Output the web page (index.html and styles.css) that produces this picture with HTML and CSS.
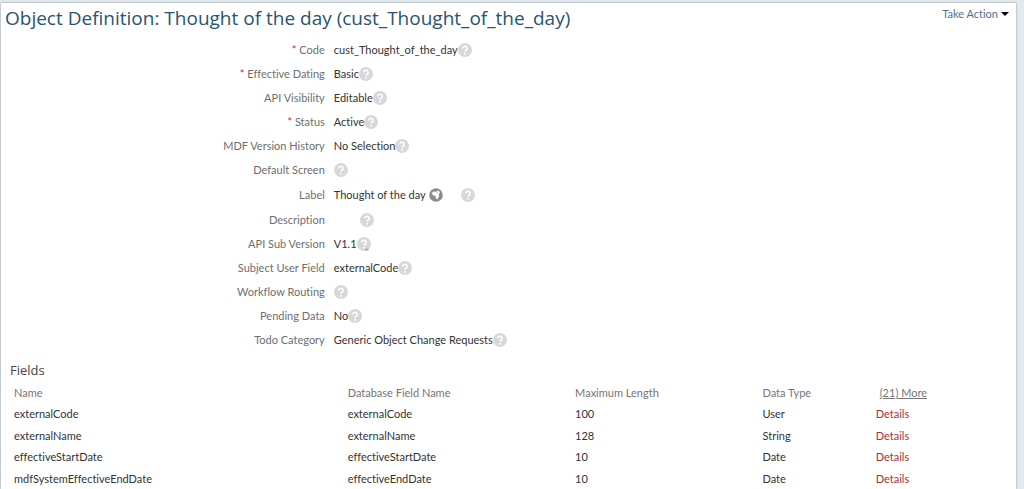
FILE: index.html
```html
<!DOCTYPE html>
<html lang="en">
<head>
<meta charset="utf-8">
<meta name="viewport" content="width=device-width, initial-scale=1">
<title>Object Definition</title>
<link rel="stylesheet" href="styles.css">
</head>
<body>
<svg class="sprite" aria-hidden="true">
  <symbol id="help" viewBox="0 0 14 14">
    <circle cx="7" cy="7" r="7" fill="#d8d8d8"/>
    <path d="M4.8 5.5a2.2 2.1 0 1 1 3.5 1.6C7.500 7.700 7 7.900 7 8.700" fill="none" stroke="#fff" stroke-width="1.500"/>
    <circle cx="7" cy="10.700" r="1" fill="#fff"/>
  </symbol>
  <symbol id="globe" viewBox="0 0 14 14">
    <circle cx="7" cy="7" r="6.800" fill="#8c8c8c"/>
    <path d="M2.500 5.500 4.500 3.500l2.500.3L9.500 2.500l1.500 2-1.200 1.600.2 2.400L8.200 11.500 6.800 10 6.600 7.800 4.600 7.500z" fill="#fff"/>
    <path d="M8.500 3.500l-1 1.500 1 .8z" fill="#8c8c8c"/>
  </symbol>
</svg>
<main class="panel">
  <header class="panel-header">
    <h1 class="title">Object Definition: Thought of the day (cust_Thought_of_the_day)</h1>
    <button class="action" type="button">Take Action <span class="caret"></span></button>
  </header>

  <dl class="form">
    <div class="row"><dt class="label required">Code</dt><dd class="value">cust_Thought_of_the_day<svg class="icon"><use href="#help"/></svg></dd></div>
    <div class="row"><dt class="label required">Effective Dating</dt><dd class="value">Basic<svg class="icon"><use href="#help"/></svg></dd></div>
    <div class="row"><dt class="label">API Visibility</dt><dd class="value">Editable<svg class="icon"><use href="#help"/></svg></dd></div>
    <div class="row"><dt class="label required">Status</dt><dd class="value">Active<svg class="icon"><use href="#help"/></svg></dd></div>
    <div class="row"><dt class="label">MDF Version History</dt><dd class="value">No Selection<svg class="icon"><use href="#help"/></svg></dd></div>
    <div class="row"><dt class="label">Default Screen</dt><dd class="value"><svg class="icon"><use href="#help"/></svg></dd></div>
    <div class="row row-translated"><dt class="label">Label</dt><dd class="value">Thought of the day<svg class="icon globe"><use href="#globe"/></svg><svg class="icon"><use href="#help"/></svg></dd></div>
    <div class="row"><dt class="label">Description</dt><dd class="value value-empty"><svg class="icon"><use href="#help"/></svg></dd></div>
    <div class="row"><dt class="label">API Sub Version</dt><dd class="value">V1.1<svg class="icon" viewBox="0 0 14 14"><use href="#help"/><path d="M8 12.500h3.500" stroke="#e08a8a" stroke-width="1.500"/></svg></dd></div>
    <div class="row"><dt class="label">Subject User Field</dt><dd class="value">externalCode<svg class="icon"><use href="#help"/></svg></dd></div>
    <div class="row"><dt class="label">Workflow Routing</dt><dd class="value"><svg class="icon"><use href="#help"/></svg></dd></div>
    <div class="row"><dt class="label">Pending Data</dt><dd class="value">No<svg class="icon"><use href="#help"/></svg></dd></div>
    <div class="row"><dt class="label">Todo Category</dt><dd class="value">Generic Object Change Requests<svg class="icon"><use href="#help"/></svg></dd></div>
  </dl>

  <section class="fields">
    <h2 class="subtitle">Fields</h2>
    <table class="table">
      <thead>
        <tr><th class="col-name">Name</th><th class="col-db">Database Field Name</th><th class="col-length">Maximum Length</th><th class="col-type">Data Type</th><th><a class="more" href="#more">(21) More</a></th></tr>
      </thead>
      <tbody>
        <tr><td>externalCode</td><td>externalCode</td><td>100</td><td>User</td><td><a class="details" href="#details">Details</a></td></tr>
        <tr><td>externalName</td><td>externalName</td><td>128</td><td>String</td><td><a class="details" href="#details">Details</a></td></tr>
        <tr><td>effectiveStartDate</td><td>effectiveStartDate</td><td>10</td><td>Date</td><td><a class="details" href="#details">Details</a></td></tr>
        <tr><td>mdfSystemEffectiveEndDate</td><td>effectiveEndDate</td><td>10</td><td>Date</td><td><a class="details" href="#details">Details</a></td></tr>
      </tbody>
    </table>
  </section>
</main>
</body>
</html>
```
FILE: styles.css
```css
* {
  box-sizing: border-box;
}

body {
  margin: 0;
  padding: 3px 8px 0 1px;
  background: #e3e9ee;
  color: #333;
  font-family: Lato, Roboto, sans-serif;
  font-size: 11px;
  font-variant-ligatures: none;
}

.sprite {
  display: none;
}

.panel {
  min-height: calc(100vh - 3px);
  background: #fff;
  box-shadow: 0 0 2px #7d8790;
}

.panel-header {
  display: flex;
  justify-content: space-between;
  align-items: flex-start;
  height: 34px;
  padding: 0 7px 0 4px;
}

.title {
  margin: 0;
  color: #2a5470;
  font-family: "Open Sans", "Noto Sans", sans-serif;
  font-size: 19px;
  font-weight: 400;
  line-height: 30px;
}

.action {
  display: flex;
  align-items: center;
  gap: 3px;
  padding: 0;
  border: 0;
  background: none;
  color: #55708f;
  font: inherit;
  line-height: 21px;
}

.caret {
  border: 4px solid transparent;
  border-top-color: #000;
  border-bottom: 0;
}

.form {
  margin: 0;
}

.row {
  display: grid;
  grid-template-columns: calc(32% - 1px) 1fr;
  column-gap: 9px;
  align-items: center;
  height: 24px;
}

.row-translated {
  height: 26px;
}

.label {
  color: #6e6e6e;
  text-align: right;
}

.required::before {
  content: "* ";
  color: #d9232e;
}

.value {
  display: flex;
  align-items: center;
  margin: 0;
}

.value-empty {
  padding-left: 26px;
}

.icon {
  width: 14px;
  height: 14px;
  margin-top: 2px;
}

.globe {
  margin-left: 3px;
  margin-right: 18px;
}

.subtitle {
  margin: 0;
  padding: 9px 9px 0;
  color: #444;
  font-family: "Open Sans", "Noto Sans", sans-serif;
  font-size: 13px;
  font-weight: 400;
  line-height: 20px;
}

.table {
  width: calc(100% - 13px);
  margin: 2px 0 0 13px;
  border-collapse: collapse;
  table-layout: fixed;
}

.table th,
.table td {
  height: 21px;
  padding: 0;
  font-weight: 400;
  text-align: left;
}

.table th {
  color: #757575;
}

.table tbody tr:nth-child(even) td {
  height: 22px;
}

.col-name {
  width: 33.3%;
}

.col-db {
  width: 22.7%;
}

.col-length {
  width: 18.7%;
}

.col-type {
  width: 11.3%;
}

.more {
  margin-left: 4px;
  color: inherit;
}

.details {
  color: #a8323c;
  text-decoration: none;
}
```
